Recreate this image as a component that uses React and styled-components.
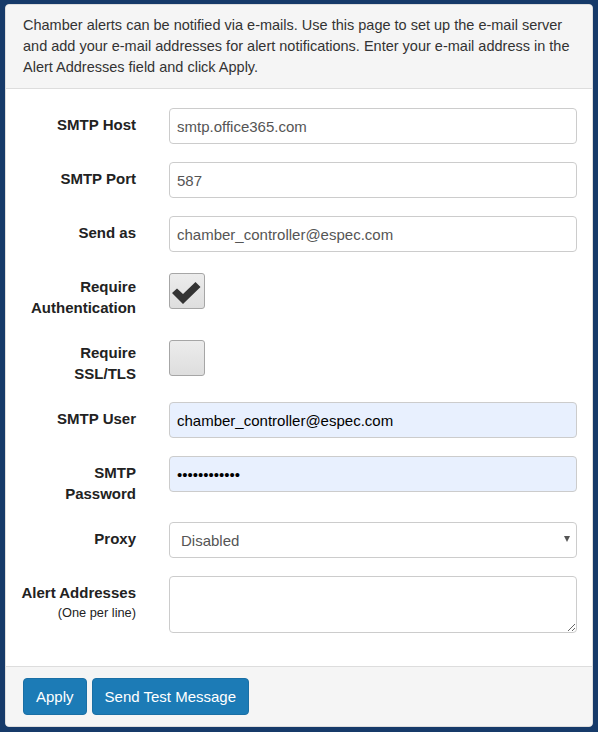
import React from "react";
import styled, { createGlobalStyle } from "styled-components";

const Global = createGlobalStyle`
  html, body { margin: 0; padding: 0; background: #163a69; }
  body { font-family: "Liberation Sans", Arial, sans-serif; font-size: 15px; color: #333; }
  * { box-sizing: border-box; }
`;

const Page = styled.div`
  padding: 4px 5px 5px 5px;
`;

const Panel = styled.div`
  background: #fff;
  border: 1px solid #ddd;
  border-radius: 4px;
  overflow: hidden;
`;

const Header = styled.div`
  background: #f5f5f5;
  border-bottom: 1px solid #ddd;
  padding: 10px 17px 10px 17px;
  font-size: 14.5px;
  line-height: 21px;
  color: #333;
`;

const Body = styled.div`
  padding: 19px 15px 33px 0;
  display: flex;
  flex-direction: column;
  gap: 18px;
`;

const Row = styled.div`
  display: grid;
  grid-template-columns: 130px 1fr;
  column-gap: 33px;
  align-items: start;
`;

const Label = styled.div`
  text-align: right;
  font-weight: bold;
  color: #222;
  line-height: 21px;
  padding-top: 6px;
`;

const Hint = styled.div`
  font-weight: normal;
  font-size: 12.8px;
  line-height: 20px;
`;

const Input = styled.input`
  display: block;
  width: 100%;
  height: 36px;
  border: 1px solid #ccc;
  border-radius: 4px;
  padding: 6px 7px;
  font-family: inherit;
  font-size: 15px;
  color: ${(p) => (p.$filled ? "#000" : "#555")};
  background: ${(p) => (p.$filled ? "#e8f0fe" : "#fff")};
  outline: none;
`;

const SelectWrap = styled.div`
  position: relative;
`;

const Select = styled.div`
  height: 36px;
  border: 1px solid #ccc;
  border-radius: 4px;
  padding: 0 11px;
  display: flex;
  align-items: center;
  color: #555;
  font-size: 15px;
  background: #fff;
`;

const Arrow = styled.span`
  position: absolute;
  right: 7px;
  top: 14px;
  width: 0;
  height: 0;
  border-left: 3.5px solid transparent;
  border-right: 3.5px solid transparent;
  border-top: 6px solid #555;
`;

const TextArea = styled.textarea`
  display: block;
  width: 100%;
  height: 57px;
  border: 1px solid #ccc;
  border-radius: 4px;
  padding: 6px 7px;
  font-family: inherit;
  font-size: 15px;
  resize: vertical;
  outline: none;
`;

const Check = styled.div`
  width: 36px;
  height: 36px;
  margin-top: ${(p) => p.$top || 3}px;
  border: 1px solid #a6a6a6;
  border-radius: 3px;
  background: linear-gradient(#ececec, #dedede);
  display: flex;
  align-items: center;
  justify-content: center;
`;

const Footer = styled.div`
  background: #f5f5f5;
  border-top: 1px solid #ddd;
  padding: 11px 17px;
  display: flex;
  gap: 5px;
`;

const Button = styled.button`
  background: #1c7bb6;
  border: 1px solid #1a6fa5;
  border-radius: 4px;
  color: #fff;
  font-family: inherit;
  font-size: 15px;
  line-height: 21px;
  padding: 7px 12px;
`;

const CheckMark = () => (
  <svg width="34" height="34" viewBox="0 0 34 34">
    <path d="M2 19 L7 14.5 L13 20 L25.5 8 L30.5 13 L13 30 Z" fill="#333" />
  </svg>
);

export default function App() {
  return (
    <>
      <Global />
      <Page>
        <Panel>
          <Header>
            Chamber alerts can be notified via e-mails. Use this page to set up the e-mail server
            and add your e-mail addresses for alert notifications. Enter your e-mail address in the
            Alert Addresses field and click Apply.
          </Header>
          <Body>
            <Row>
              <Label>SMTP Host</Label>
              <Input defaultValue="smtp.office365.com" />
            </Row>
            <Row>
              <Label>SMTP Port</Label>
              <Input defaultValue="587" />
            </Row>
            <Row>
              <Label>Send as</Label>
              <Input defaultValue="chamber_controller@espec.com" />
            </Row>
            <Row>
              <Label>
                Require
                <br />
                Authentication
              </Label>
              <Check>
                <CheckMark />
              </Check>
            </Row>
            <Row>
              <Label>
                Require
                <br />
                SSL/TLS
              </Label>
              <Check $top={4} />
            </Row>
            <Row>
              <Label>SMTP User</Label>
              <Input $filled defaultValue="chamber_controller@espec.com" />
            </Row>
            <Row>
              <Label>
                SMTP
                <br />
                Password
              </Label>
              <Input $filled type="password" defaultValue="abcdefghijkl" />
            </Row>
            <Row>
              <Label>Proxy</Label>
              <SelectWrap>
                <Select>Disabled</Select>
                <Arrow />
              </SelectWrap>
            </Row>
            <Row>
              <Label>
                Alert Addresses
                <Hint>(One per line)</Hint>
              </Label>
              <TextArea />
            </Row>
          </Body>
          <Footer>
            <Button>Apply</Button>
            <Button>Send Test Message</Button>
          </Footer>
        </Panel>
      </Page>
    </>
  );
}
